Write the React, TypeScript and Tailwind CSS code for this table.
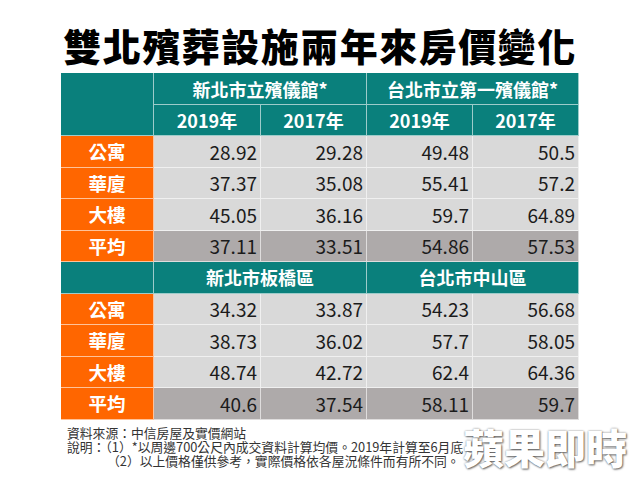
const FONT = "font-['Noto_Sans_CJK_TC','Noto_Sans_CJK_SC',sans-serif]";

type Row = { label: string; values: string[]; avg?: boolean };

const upper: Row[] = [
  { label: "公寓", values: ["28.92", "29.28", "49.48", "50.5"] },
  { label: "華廈", values: ["37.37", "35.08", "55.41", "57.2"] },
  { label: "大樓", values: ["45.05", "36.16", "59.7", "64.89"] },
  { label: "平均", values: ["37.11", "33.51", "54.86", "57.53"], avg: true },
];

const lower: Row[] = [
  { label: "公寓", values: ["34.32", "33.87", "54.23", "56.68"] },
  { label: "華廈", values: ["38.73", "36.02", "57.7", "58.05"] },
  { label: "大樓", values: ["48.74", "42.72", "62.4", "64.36"] },
  { label: "平均", values: ["40.6", "37.54", "58.11", "59.7"], avg: true },
];

const cell = "border-r border-b border-white/60 flex items-center";
const head = `${cell} bg-[#0a807c] justify-center text-white font-bold text-[18px]`;

function DataRows({ rows }: { rows: Row[] }) {
  return (
    <>
      {rows.map((r) => (
        <div key={r.label + r.values[0]} className="contents">
          <div className={`${cell} h-[31.5px] bg-[#ff6600] justify-center text-white font-bold text-[18.5px]`}>
            {r.label}
          </div>
          {r.values.map((v, i) => (
            <div
              key={i}
              className={`${cell} h-[31.5px] justify-end pr-[3px] text-[19px] text-[#1b1b1b] ${
                r.avg ? "bg-[#aeaaaa]" : "bg-[#d9d9d9]"
              }`}
            >
              {v}
            </div>
          ))}
        </div>
      ))}
    </>
  );
}

export default function App() {
  return (
    <div className={`relative w-[640px] h-[480px] overflow-hidden bg-white ${FONT}`}>
      <h1 className="pt-[25px] text-center text-[38px] leading-[40px] font-black tracking-[1.5px] text-black">
        雙北殯葬設施兩年來房價變化
      </h1>

      <div className="mt-[8px] ml-[61px] grid w-[518px] grid-cols-[93px_107px_106px_106px_106px] leading-none">
        <div className={`${head} row-span-2`} />
        <div className={`${head} col-span-2 h-[32px]`}>新北市立殯儀館*</div>
        <div className={`${head} col-span-2 h-[32px]`}>台北市立第一殯儀館*</div>
        <div className={`${head} h-[31px]`}>2019年</div>
        <div className={`${head} h-[31px]`}>2017年</div>
        <div className={`${head} h-[31px]`}>2019年</div>
        <div className={`${head} h-[31px]`}>2017年</div>

        <DataRows rows={upper} />

        <div className={`${head} h-[31.5px]`} />
        <div className={`${head} col-span-2 h-[31.5px]`}>新北市板橋區</div>
        <div className={`${head} col-span-2 h-[31.5px]`}>台北市中山區</div>

        <DataRows rows={lower} />
      </div>

      <div className="mt-[6px] ml-[67px] text-[12.8px] leading-[14px] text-[#333]">
        <p>資料來源：中信房屋及實價網站</p>
        <p>說明：（1）*以周邊700公尺內成交資料計算均價。2019年計算至6月底</p>
        <p className="pl-[40px]">（2）以上價格僅供參考，實際價格依各屋況條件而有所不同。</p>
      </div>

      <div className="absolute left-[463px] top-[426px] text-[41px] leading-none font-black text-white [text-shadow:1px_1px_2px_rgba(0,0,0,0.55),0_0_2px_rgba(0,0,0,0.45)]">
        蘋果即時
      </div>
    </div>
  );
}
